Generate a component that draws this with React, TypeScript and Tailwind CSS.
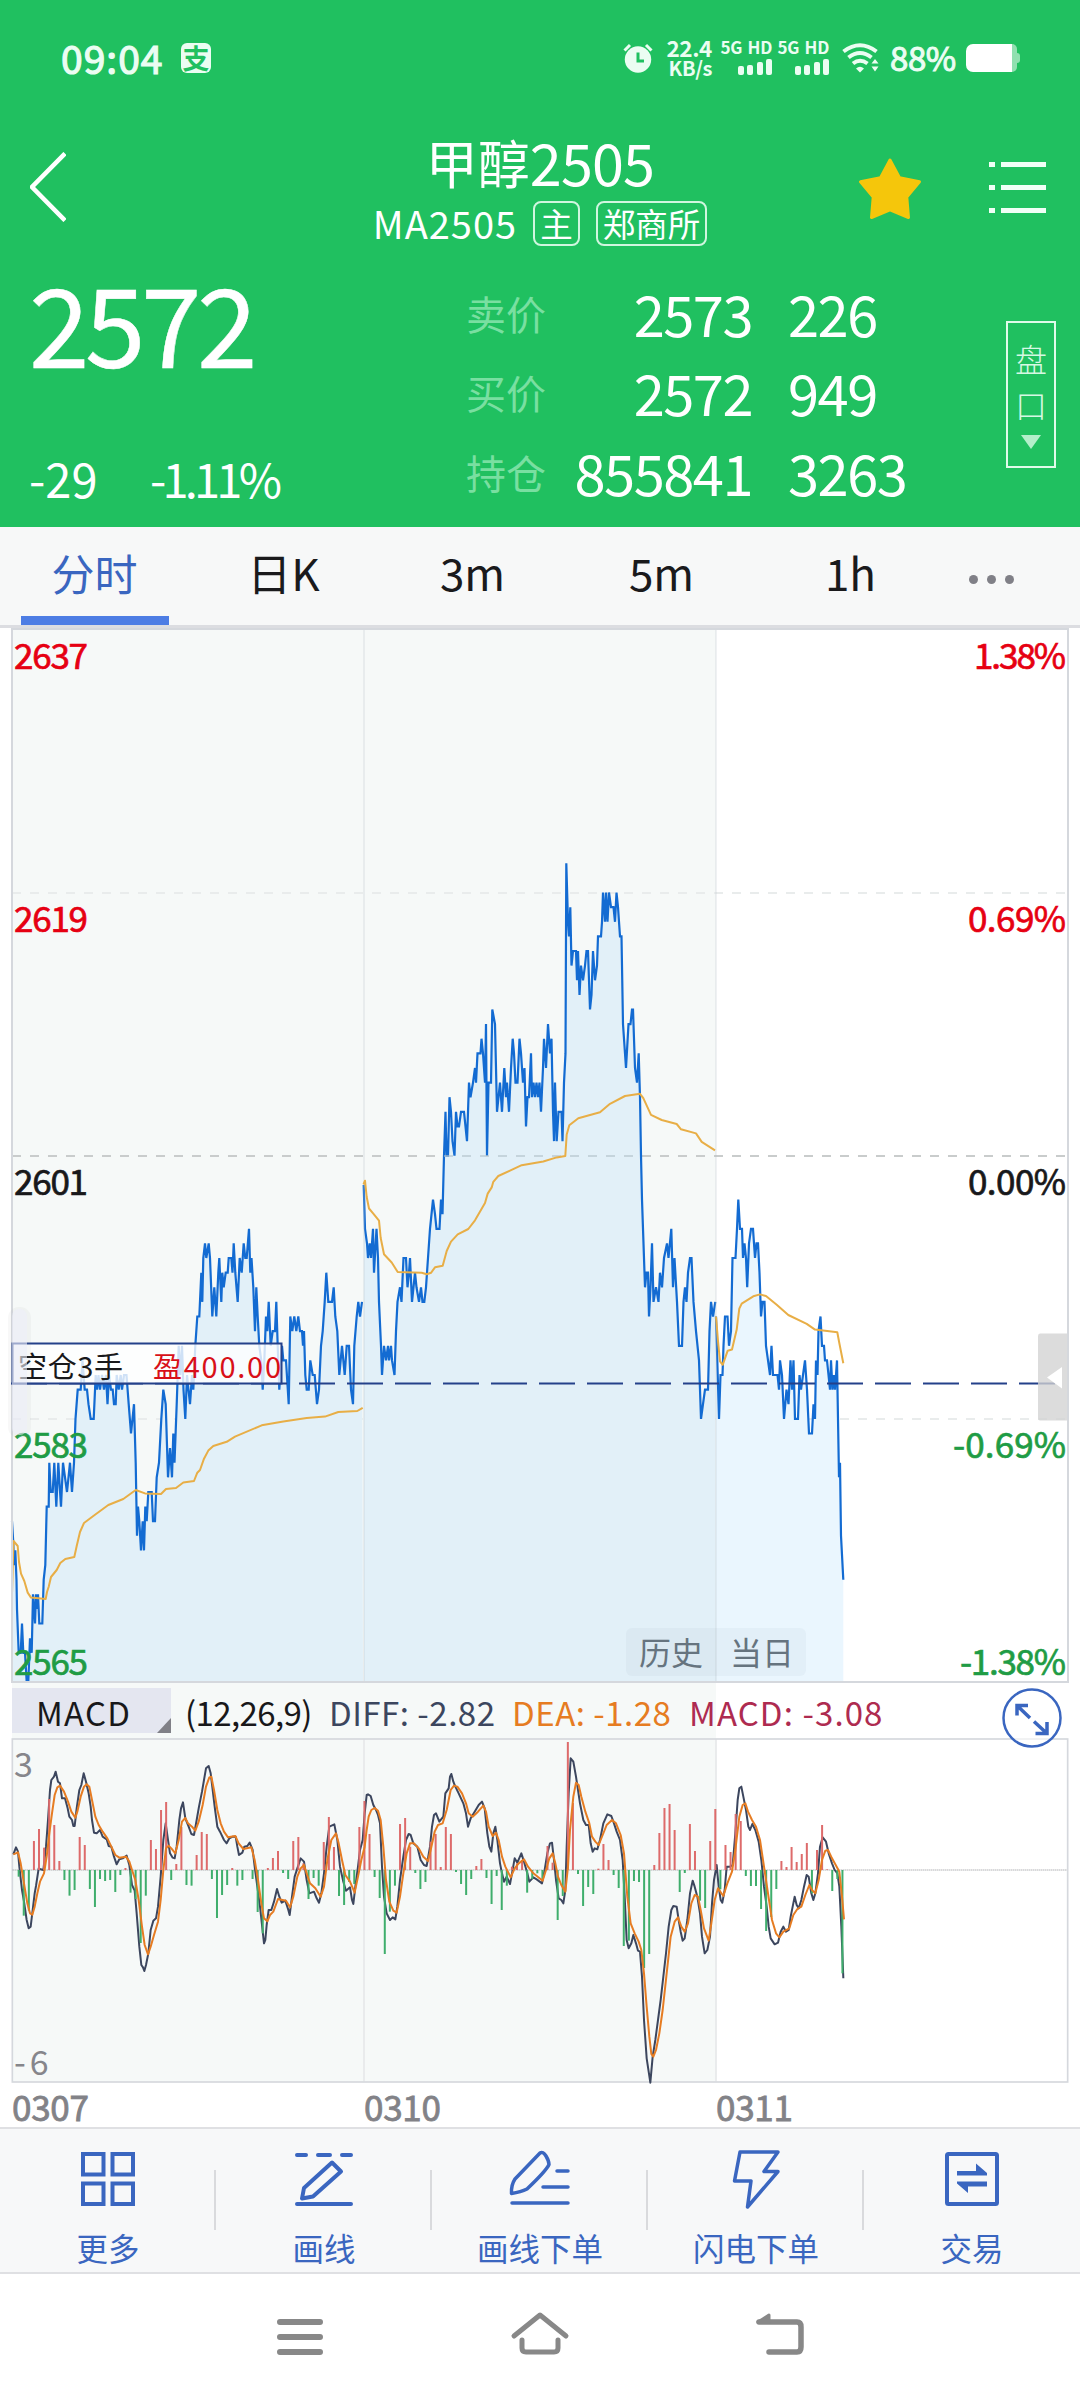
import React from "react";

// minute prices as "x,offset" — offset in yuan from the previous settlement (2601)
const PRICE_HISTORY_1 =
  "12,-25 13.3,-26.5 14,-28 15.3,-27 16.5,-29 17,-31 18.7,-34 20.7,-34 22,-32 23.3,-34 25,-34 26.7,-36 28.3,-36 30,-33 31.7,-34 33,-30 35,-32 36,-30 37,-31 38,-30 39.3,-32 42.3,-32 43.7,-29 45.3,-28 46.7,-24 48.7,-24 49.3,-21 50.7,-23 52.7,-23 54.3,-21 56.3,-24 58.3,-21 61,-24 63,-21 65,-22 67,-23 70,-21 72,-23 74,-21 75.5,-18 77.7,-16 80.7,-16 82.5,-14 84.7,-16 87,-16 88.5,-17 90.7,-18 93.7,-18 95.7,-15 97,-16 98.5,-15 100,-16 102,-15 104,-16 106,-15 107.5,-17 109,-15 111,-16 112.7,-16 114,-17 115.7,-17 116.7,-15 118.7,-16 120.7,-15 122,-16 124,-15 126.5,-15 128.7,-17 131,-19 134,-17 135.7,-21 137,-26 138,-24 139.3,-25 141,-27 142.7,-25 144,-27 145.3,-24 146.7,-25 148.3,-23 151.7,-23 153,-25 155,-25 156.7,-22 159,-21 161.3,-18 163.3,-16 165.7,-17 168,-22 170,-20 172,-22 173.3,-19 174.5,-21 176.7,-17 178.7,-13 180.3,-15 182,-13 183.5,-16 185.3,-18 187,-15 190,-17 192,-15 193.3,-16 195.3,-13 197.3,-11 199.3,-11 201.3,-8 202.3,-10 203.3,-7 205,-6 206.3,-7 208.7,-6 210,-7 212.3,-11 214.3,-9 216.3,-11 218.3,-8 219.3,-7 221.3,-10 222.3,-8 223.7,-9 225.7,-8 227.7,-8 228.7,-7 231.3,-7 232.5,-8 233.7,-6 235.3,-8 237.7,-10 239.7,-7 241.7,-8 243.7,-6 245.3,-7 246.7,-7 249,-5 250.3,-8 251.5,-7 253.3,-9 255,-12 256.3,-9 257.7,-11 259.3,-13 261.3,-14 262.7,-16 264.3,-14 266,-11 267.3,-12 268.7,-10 270.7,-13 272.7,-12 275,-12 276.3,-10 277.7,-13 279.3,-16 282,-13 283.3,-14 286,-14 288.7,-17 290.3,-11 292.3,-12 294.3,-11 296.3,-12 298.3,-11 300,-12 302,-12 303,-13 304,-12 305.3,-15 306.7,-16 308.7,-16 310.3,-14 312.7,-15 314.7,-15 317,-17 319,-16 321,-13 322.7,-12 324.7,-10 326.3,-8 328.3,-10 332,-10 333.7,-9 335.3,-11 337.3,-12 339.3,-15 342,-13 344.7,-15 346.7,-13 349,-13 351,-16 353,-17 354.3,-13 356.7,-11 358.3,-10 360,-11 362,-10";
const PRICE_HISTORY_2 =
  "363.7,-2 365,-5 367,-6 368,-7 369.7,-6 371,-7 373,-5 374,-8 376.5,-5 378,-7 379,-10 381,-13 382,-15 384,-13 386,-14 388,-13 389,-14 391,-13 392,-14 394.5,-15 396,-12 397.5,-10 400,-9 401.5,-10 403.5,-7 406,-7 407.5,-9 409,-8 410,-7 412,-10 415,-8 416.5,-9 419,-10 421,-9 422.5,-10 424.3,-10 426,-9 428,-7 430,-5 433,-3 435,-4 436.5,-5 439.5,-5 441,-3 442.5,-4 444,0 445.5,3 446.5,0 448,0 449.5,4 451,3 452.5,1 454.5,0 456,3 457.5,2 459,2 461,3 464,3 467,1 469,5 470.5,4 473,5 475,6 476,5 477.5,7 480.5,7 481.5,8 483,7 485,5 486,9 487,0 488.5,5 491,5 492.3,10 495,9 497,3 500,5 502,3 504.3,6 506,4 507,5 509,3 511,6 512.7,8 514,7 515.5,5 517.5,5 519.5,8 521,7 522,6 523,5 524.5,6 526,2 527.5,4 529,4 531,7 532,4 533.5,5 535,4 536.5,5 538,4 539.5,5 541,3 543,6 544,8 546,6 548,9 550,7 551.5,8 553,3 554,1 555,5 556.7,1 558.5,3 561.5,3 562.5,1 564,5 565.5,7 566.3,20 568,16 569,15 570.3,17 571.5,13 573,14 576,14 577,12 578,14 579.5,11 581,13 583,12 585,13 586.5,14 588,14 590,10 591.5,11 593,14 595,12 597,13 598,15 601,15 602,16 603,18 605,16 606,18 607.5,16 609,18 611,17 613.5,17 615,16 616.5,18 618,17 620,15 621.5,15 623,9 626,6 628.5,9 630.5,9 632,10 633,10 635,6 637,5 638.7,7 640,4 641,0 642,-3 643.5,-6 645,-9 646.5,-8 648,-8 649,-11 650.5,-9 652,-6 653.5,-10 656,-9 658.5,-10 660,-8 662,-9 664,-7 667,-6 668.5,-7 671.3,-5 673,-9 674.5,-7 677,-10 679,-13 682,-13 683.5,-10 685,-9 686.5,-10 688,-8 690,-7 691.5,-7 693.5,-10 696,-12 699,-14 701,-18 703,-17 705,-16 708,-16 709.5,-12 711,-10 713,-11 715.3,-10";
const PRICE_TODAY =
  "716,-11 719,-18 720.5,-15 722.5,-15 723.5,-13 725,-11 727.5,-11 729,-13 731,-12 732.5,-7 735.5,-7 737,-5 738.3,-3 740,-5 742,-5 743,-7 744.5,-6 746,-7 747.2,-9 749,-6 751,-5 753,-5 755,-7 756.5,-6 758,-6 759.5,-8 761,-11 762.5,-10 764.5,-10 766,-13 768,-14 770,-15 771.5,-13 773,-15 777.5,-15 779,-16 780,-14 782,-15 784,-18 786.5,-16 788.5,-17 790.5,-14 792,-16 793.5,-14 795,-18 798,-18 799.5,-15 801,-16 803,-15 805,-14 807,-16 809,-19 812,-19 813.5,-17 815,-18 816,-14 817.5,-15 818.5,-12 820.5,-11 822,-13 824,-13 825,-14 827,-14 828.5,-15 830,-16 831,-14 832.5,-16 834,-15 835,-16 837,-14 838,-18 839,-22 840,-21 841,-26 843.3,-29";

const AVG_LINES = [
  "12,1593.7 13.5,1541 17.7,1546 19,1562 21,1573.7 24.3,1581 27.7,1592.6 31,1597.6 45.7,1599 47,1592 48.7,1586.7 51,1577 56.7,1570 60.3,1563 65.3,1559 74.3,1557 76.7,1546 80,1532 84,1523 93.3,1516 108.3,1505 123.3,1499 135.7,1490 145,1493.4 161,1494 166,1489 176,1488 183.3,1482.5 194,1481 197.3,1472.7 200,1470 204,1458.7 208.3,1450.6 213.3,1446 226.7,1441.8 235,1436.6 261.7,1425.3 283.3,1421.5 306.7,1418 325,1416.6 338.3,1412 357.3,1411 362.7,1407.8",
  "363.5,1184.4 365,1180.7 366.7,1197 369,1208.5 373.3,1213.6 379,1220.7 380.7,1238 384,1254.3 391.7,1262.5 397.7,1272 421.7,1272.8 426.7,1274.3 431,1272.8 435,1267.3 442.7,1265.8 446.7,1251 451,1241.7 457.7,1234.3 468.3,1229 475,1220.3 485,1203 487.7,1193.6 491.7,1187.4 493.3,1181.8 498.3,1176 510,1170.7 521.7,1165.2 543.3,1161.5 556.7,1157.4 565.3,1156 566.7,1134.5 569.3,1125.2 578.3,1118.2 600,1112.3 610,1103.8 625,1096 640,1093.8 643.3,1098.2 651,1114.9 661.7,1120 676.7,1124 681,1129.3 696,1133.4 701.7,1141.9 715,1150.4",
  "716,1316.6 718,1341 720,1361.4 722.7,1364.8 727.7,1350.7 732,1349.5 736.7,1329.6 739.3,1308.6 741.7,1303.6 753.3,1296.3 760,1294.4 766,1296 776.7,1304.7 788.3,1315 806.7,1323.9 815,1329.6 837.3,1332.3 839.3,1343 843.3,1363.3",
];

// the indicator panel is drawn in thirds of a pixel
const DIFF_LINE =
  "40,523 48,502 54,515 58,560 66,630 72,665 80,720 86,745 92,740 98,690 104,640 108,618 116,565 122,568 130,570 138,500 144,420 150,330 154,300 162,290 167,275 174,305 180,310 186,355 195,355 203,385 208,410 216,420 220,438 224,438 230,385 238,330 244,315 251,280 258,305 266,340 272,380 276,420 282,458 290,460 300,450 308,470 320,478 326,498 334,500 342,530 350,553 358,538 368,535 380,527 388,555 396,615 404,632 410,700 418,800 424,855 429,862 433,873 438,855 445,820 452,750 460,722 468,715 474,680 482,590 490,480 497,430 504,480 510,520 518,533 524,535 530,500 538,420 543,385 549,367 556,415 566,440 574,462 582,465 590,420 597,380 606,335 612,300 618,265 626,258 632,280 638,330 644,380 652,440 660,455 672,480 680,490 688,475 698,470 707,470 712,500 717,525 727,518 733,500 742,498 749,488 758,510 764,560 772,620 780,680 786,735 792,790 796,780 800,735 806,690 814,690 822,665 831,627 838,650 845,668 856,662 865,690 869,705 876,650 884,590 892,565 902,535 912,545 920,600 928,640 942,635 950,655 957,668 964,640 972,580 980,500 988,440 1003,433 1012,480 1020,560 1030,605 1038,632 1050,622 1056,660 1060,672 1066,620 1074,560 1080,510 1088,480 1094,400 1100,345 1104,343 1112,348 1120,375 1128,390 1134,405 1140,430 1146,560 1152,650 1160,700 1170,720 1178,712 1186,718 1192,680 1200,600 1210,530 1218,480 1226,462 1232,465 1240,490 1252,500 1262,540 1272,555 1280,558 1290,500 1296,440 1302,405 1308,400 1318,425 1330,410 1336,340 1346,325 1350,290 1354,282 1360,305 1366,320 1376,340 1390,370 1398,400 1404,440 1412,415 1424,395 1436,375 1446,365 1454,385 1462,460 1468,500 1474,515 1480,460 1486,440 1492,480 1500,550 1506,580 1512,605 1520,590 1530,612 1536,580 1544,535 1552,548 1564,520 1572,545 1582,580 1588,605 1600,592 1610,598 1626,610 1634,570 1642,520 1650,490 1656,488 1662,540 1668,600 1676,655 1684,660 1690,670 1696,630 1700,500 1706,340 1712,235 1720,245 1728,290 1740,370 1750,420 1758,435 1766,435 1772,490 1778,515 1784,505 1792,508 1800,480 1810,430 1822,403 1834,408 1842,430 1850,455 1860,480 1868,540 1874,650 1880,780 1886,805 1894,790 1900,765 1908,790 1914,812 1920,815 1926,890 1932,1020 1940,1135 1946,1175 1951,1208 1958,1130 1966,1080 1974,1020 1982,960 1990,890 1998,820 2006,740 2014,690 2020,678 2030,680 2036,720 2042,755 2048,782 2054,775 2062,720 2070,640 2078,602 2084,620 2092,650 2100,700 2106,770 2114,820 2122,810 2130,770 2136,670 2142,600 2150,555 2156,620 2162,660 2167,668 2174,630 2180,560 2190,560 2198,555 2206,460 2213,360 2218,325 2224,320 2230,350 2238,390 2245,440 2250,450 2257,432 2266,450 2276,485 2284,540 2292,620 2300,680 2306,740 2312,775 2324,793 2334,788 2342,755 2350,740 2358,755 2366,750 2372,710 2378,680 2384,650 2390,675 2396,685 2404,660 2412,620 2420,585 2426,590 2434,640 2440,660 2446,640 2454,580 2460,500 2468,472 2478,485 2486,520 2496,550 2504,570 2512,580 2518,620 2524,740 2530,895";
const DEA_LINE =
  "40,523 54,517 62,550 72,610 82,670 90,700 97,704 104,680 112,640 120,605 132,580 140,530 148,460 156,400 164,345 172,322 180,317 192,335 204,365 214,395 226,413 232,395 242,350 252,320 260,313 268,320 276,360 286,410 296,435 308,455 322,475 334,500 346,525 358,533 378,530 388,545 396,570 406,600 416,660 426,740 434,795 444,823 452,800 462,765 474,725 482,660 490,570 498,505 506,497 514,505 526,520 536,480 546,425 556,414 564,430 576,440 586,452 596,425 608,375 618,320 628,292 634,290 642,330 652,390 662,430 672,455 684,472 706,468 716,490 730,507 754,502 764,540 774,600 784,670 792,715 802,724 810,705 820,695 834,657 858,662 870,682 880,650 892,590 902,565 912,555 920,580 930,610 946,625 962,650 972,620 982,540 994,480 1008,460 1016,490 1026,540 1036,585 1050,605 1064,638 1074,590 1084,540 1094,500 1100,450 1106,410 1114,390 1124,384 1134,392 1142,420 1150,500 1158,600 1168,665 1180,692 1190,698 1200,650 1210,580 1220,520 1230,490 1242,490 1256,505 1270,530 1284,543 1292,510 1304,455 1314,435 1328,430 1340,390 1352,330 1362,317 1372,320 1386,340 1398,370 1406,400 1418,410 1434,395 1450,377 1458,395 1466,440 1478,468 1488,458 1496,480 1506,530 1516,560 1532,592 1544,565 1556,550 1572,538 1584,560 1600,580 1628,602 1638,570 1648,535 1658,520 1666,550 1674,590 1684,615 1696,635 1704,560 1710,450 1720,350 1728,308 1736,315 1744,350 1756,395 1768,430 1776,470 1786,485 1796,495 1808,465 1820,435 1836,420 1848,430 1862,465 1872,520 1882,650 1892,730 1904,760 1916,785 1924,810 1932,880 1940,980 1948,1070 1954,1122 1960,1130 1968,1110 1978,1060 1988,990 2000,880 2012,770 2024,725 2034,712 2044,740 2054,755 2064,730 2074,670 2084,645 2094,650 2102,690 2112,745 2126,782 2134,730 2144,660 2154,625 2170,648 2182,610 2196,575 2206,510 2218,410 2228,375 2236,370 2244,395 2256,420 2268,440 2280,480 2292,560 2304,640 2316,720 2328,760 2338,772 2350,755 2368,745 2380,705 2392,687 2404,680 2416,645 2428,615 2436,630 2446,640 2456,600 2466,540 2476,512 2484,510 2496,535 2510,560 2518,575 2526,650 2532,718";
const MACD_ZERO = 570;
const MACD_BARS = [
  590, 707, 692, 483, 447, 503, 357, 435, 543, 600, 647, 630, 471, 495, 627, 681,
  597, 603, 600, 636, 585, 564, 638, 657, 789, 647, 480, 507, 390, 366, 600, 552,
  441, 615, 617, 525, 456, 462, 597, 714, 645, 615, 564, 617, 600, 570, 597, 696,
  760, 564, 534, 513, 579, 597, 483, 471, 550, 657, 594, 617, 486, 411, 501, 648,
  675, 606, 612, 441, 363, 462, 591, 654, 822, 695, 617, 432, 414, 500, 579, 627,
  606, 485, 462, 561, 441, 462, 576, 612, 645, 597, 558, 537, 594, 672, 588, 690,
  617, 560, 550, 540, 638, 597, 580, 597, 498, 548, 720, 648, 186, 369, 582, 678,
  621, 642, 566, 492, 540, 585, 624, 798, 782, 603, 606, 864, 822, 555, 459, 384,
  372, 450, 636, 579, 432, 513, 662, 684, 483, 387, 628, 495, 516, 402, 423, 588,
  618, 618, 687, 753, 711, 627, 543, 561, 501, 546, 522, 489, 640, 510, 435, 568,
  633, 597, 880,
];

const toPoints = (series: string) =>
  series
    .split(" ")
    .map((pair) => {
      const [x, offset] = pair.split(",").map(Number);
      return `${x},${(1155.7 - offset * 14.62).toFixed(1)}`;
    })
    .join(" ");

interface AreaProps {
  series: string;
  from: number;
  to: number;
  fill: string;
}

function Area({ series, from, to, fill }: AreaProps) {
  const points = toPoints(series);
  return (
    <>
      <polygon points={`${from},1681 ${points} ${to},1681`} fill={fill} />
      <polyline points={points} fill="none" stroke="#136bd2" strokeWidth="2.2" />
    </>
  );
}

const quotes = [
  { label: "卖价", price: "2573", amount: "226" },
  { label: "买价", price: "2572", amount: "949" },
  { label: "持仓", price: "855841", amount: "3263" },
];

const tabs = ["分时", "日K", "3m", "5m", "1h"];

const axis = [
  { y: 669, price: "2637", pct: "1.38%", x: 974, color: "#e60012" },
  { y: 932, price: "2619", pct: "0.69%", x: 968, color: "#e60012" },
  { y: 1195, price: "2601", pct: "0.00%", x: 968, color: "#18181a" },
  { y: 1457.5, price: "2583", pct: "-0.69%", x: 953, color: "#1f9c45" },
  { y: 1675.4, price: "2565", pct: "-1.38%", x: 960, color: "#1f9c45" },
];

function Signal() {
  return (
    <div className="flex h-[34px] w-12 flex-col items-end justify-between">
      <span className="h-3 whitespace-nowrap text-[17px] font-bold leading-3 tracking-[-0.3px] [word-spacing:2px]">
        5G HD
      </span>
      <div className="flex items-end gap-[3.3px]">
        <i className="h-[9px] w-1.5 rounded-[2px] bg-[#ebfdf2]" />
        <i className="h-2.5 w-1.5 rounded-[2px] bg-[#ebfdf2]" />
        <i className="h-[13px] w-1.5 rounded-[2px] bg-[#ebfdf2]" />
        <i className="h-4 w-1.5 rounded-[2px] bg-[#ebfdf2]" />
      </div>
    </div>
  );
}

function StatusBar() {
  return (
    <div className="flex h-[115px] items-center pl-[61px] pr-[60px] text-[#ebfdf2]">
      <span className="w-[120px] pb-px text-[39px] font-normal leading-none tracking-[1px] [-webkit-text-stroke:1.2px]">
        09:04
      </span>
      <span className="flex h-[30px] w-[30px] items-center justify-center rounded-[6px] bg-[#ebfdf2] text-[27px] font-bold leading-none text-[#20c060]">
        支
      </span>
      <div className="ml-auto flex items-center">
        <svg width="30" height="30" viewBox="0 0 30 30">
          <circle cx="15" cy="16.5" r="13.2" fill="currentColor" />
          <path d="M1.5 7.5 7 2M28.500 7.500 23 2" stroke="currentColor" strokeWidth="3" />
          <path d="M15 9.500v8.500h6" fill="none" stroke="#20c060" strokeWidth="3" />
        </svg>
        <div className="ml-3 flex w-[47px] flex-col items-end gap-px text-[22.5px] font-bold leading-[19px] tracking-[-0.4px]">
          <span>22.4</span>
          <span className="text-[20px]">KB/s</span>
        </div>
        <div className="ml-3 flex gap-[9px]">
          <Signal />
          <Signal />
        </div>
        <svg className="ml-[13px]" width="37" height="30" viewBox="0 0 37 30">
          <g fill="none" stroke="currentColor" strokeWidth="4">
            <path d="M1.500 8.500Q18 -4 34.500 8.500" />
            <path d="M6.500 14.500Q18 5.500 29.500 14.500" />
            <path d="M11 20.500Q18 15 25.500 20.500" />
          </g>
          <path d="M14 25.500Q18 22 22 25.500L18 29.500ZM29.500 20.500 33 16l3.500 4.500ZM29.500 23.500h7L33 28.500Z" fill="currentColor" />
        </svg>
        <span className="ml-[11px] w-[68px] text-[33px] leading-none tracking-[-0.4px] [-webkit-text-stroke:1px]">
          88%
        </span>
        <div className="ml-2 flex items-center">
          <div className="h-7 w-[46px] rounded-l-[7px] bg-white" />
          <div className="h-7 w-[5px] rounded-r-[5px] bg-[#90e0b0]" />
          <div className="h-2.5 w-[3px] rounded-r-[3px] bg-[#90e0b0]" />
        </div>
      </div>
    </div>
  );
}

function Header() {
  return (
    <header className="h-[527px] bg-[#20c060] text-white">
      <StatusBar />
      <div className="flex h-[144px] items-center">
        <div className="w-[358px] pl-[30px]">
          <svg width="36" height="70" viewBox="0 0 36 70">
            <path d="M35 1.500 2 35l33 33.500" fill="none" stroke="currentColor" strokeWidth="4.500" />
          </svg>
        </div>
        <div className="flex w-[364px] flex-col items-center self-start pt-[14px]">
          <div className="flex h-[66px] items-center whitespace-nowrap leading-none">
            <span className="text-[52px]">甲醇</span>
            <span className="text-[57.5px] tracking-[-0.8px]">2505</span>
          </div>
          <div className="mt-[5px] flex h-[46px] items-center text-[38px] leading-none">
            <span className="tracking-[1px]">MA2505</span>
            <span className="ml-4 flex h-[45px] items-center rounded-[8px] border-2 border-[#d0f6df] px-[5px] text-[32.5px]">
              主
            </span>
            <span className="ml-4 flex h-[45px] items-center rounded-[8px] border-2 border-[#d0f6df] px-[5px] text-[32.5px]">
              郑商所
            </span>
          </div>
        </div>
        <svg className="ml-[136px] mt-1" width="64" height="62" viewBox="0 0 64 62">
          <path
            d="M32 2 41.500 19.800 61.500 23.800 48.800 39 50.500 59.500 32 51.800 13.500 59.500 15.200 39 2.500 23.800 22.500 19.800Z"
            fill="#f5c60b"
            stroke="#f5c60b"
            strokeWidth="3"
            strokeLinejoin="round"
          />
        </svg>
        <div className="ml-[67px] flex flex-col gap-[18px]">
          {[0, 1, 2].map((row) => (
            <div key={row} className="flex gap-1.5">
              <i className="h-[5px] w-1.5 bg-[#f0fff6]" />
              <i className="h-[5px] w-[45px] bg-[#f0fff6]" />
            </div>
          ))}
        </div>
      </div>
      <div className="flex h-[268px]">
        <div className="w-[466px] pl-[29px]">
          <div className="mt-[4px] h-[116px] text-[109px] leading-[116px] tracking-[-4.500px] [-webkit-text-stroke:0.5px]">
            2572
          </div>
          <div className="mt-[71px] flex text-[47px] leading-[56px]">
            <span className="w-[121px]">-29</span>
            <span className="tracking-[-3.8px]">-1.11%</span>
          </div>
        </div>
        <div className="mt-[14px] w-[540px]">
          {quotes.map((q) => (
            <div key={q.label} className="flex h-[79.500px] items-center leading-none">
              <span className="w-[83px] text-[40px] text-[#79dfa1]">{q.label}</span>
              <span className="w-[203px] text-right text-[56px] tracking-[-1.500px]">{q.price}</span>
              <span className="ml-9 text-[56px] tracking-[-1.500px]">{q.amount}</span>
            </div>
          ))}
        </div>
        <div className="mt-[62px] flex h-[147px] w-[50px] flex-col items-center border-2 border-[#e0fbea] pt-3 text-[32px] font-light leading-[46px] text-[#d6f8e3]">
          <span>盘</span>
          <span>口</span>
          <svg className="mt-2" width="20" height="14" viewBox="0 0 20 14">
            <path d="M0 0h20L10 14Z" fill="#b3efca" />
          </svg>
        </div>
      </div>
    </header>
  );
}

function Tabs() {
  return (
    <nav className="flex h-[101px] border-b-[3px] border-[#dcdde1] bg-[#f7f8f8] text-[44px] text-[#1a1a1c]">
      {tabs.map((tab, i) => (
        <div key={tab} className="flex w-[189px] flex-col items-center justify-between">
          <span
            className={
              i === 0
                ? "pt-[14px] text-[43px] leading-[62px] text-[#3a66c0]"
                : "pt-[14px] leading-[62px]"
            }
          >
            {tab}
          </span>
          {i === 0 && <div className="h-[9px] w-[148px] bg-[#4d7de4]" />}
        </div>
      ))}
      <div className="flex w-[92px] items-center justify-center gap-[9px] pt-[6px]">
        <i className="h-[9px] w-[9px] rounded-full bg-[#808087]" />
        <i className="h-[9px] w-[9px] rounded-full bg-[#808087]" />
        <i className="h-[9px] w-[9px] rounded-full bg-[#808087]" />
      </div>
    </nav>
  );
}

function PriceChart() {
  return (
    <svg className="block overflow-visible" width="1080" height="1055" viewBox="0 628 1080 1055">
      <rect x="12" y="628" width="704" height="1055" fill="#f6f9f8" />
      <g stroke="#e9ecec" strokeWidth="2" strokeDasharray="9 9">
        <path d="M12 893H1067M12 1419H1067" />
        <path d="M12 1156H1067" stroke="#c9cccc" />
      </g>
      <Area series={PRICE_HISTORY_1} from={12} to={363} fill="#e2f0f8" />
      <Area series={PRICE_HISTORY_2} from={364} to={716} fill="#e2f0f8" />
      <Area series={PRICE_TODAY} from={716} to={843.3} fill="#eaf6fe" />
      <path d="M364 628V1682M716 628V1682" stroke="#b8c4cc" strokeOpacity=".3" strokeWidth="1.500" />
      <path d="M444 1156H640" stroke="#b3c2ca" strokeWidth="2" strokeDasharray="9 9" opacity=".6" />
      {AVG_LINES.map((points) => (
        <polyline key={points} points={points} fill="none" stroke="#e8ae46" strokeWidth="2" strokeLinejoin="round" />
      ))}
      <rect x="12" y="629" width="1056" height="1053" fill="none" stroke="#d5d8dd" strokeWidth="2" />

      <g fontSize="35" strokeWidth=".7">
        {axis.map((a) => (
          <g key={a.price} fill={a.color} stroke={a.color}>
            <text x="14" y={a.y} textLength="74">
              {a.price}
            </text>
            <text x={a.x} y={a.y} textLength={1066 - a.x}>
              {a.pct}
            </text>
          </g>
        ))}
      </g>

      <path d="M11 1383.500H1067" stroke="#24418a" strokeWidth="2" strokeDasharray="36 12" />
      <rect x="12.500" y="1343.500" width="269" height="40" fill="#fff" fillOpacity=".8" stroke="#24418a" strokeWidth="2" />
      <g fontSize="29">
        <text x="18" y="1377.5" textLength="105" fill="#18181a">
          空仓3手
        </text>
        <text x="153" y="1377.5" textLength="128" fill="#d81018">
          盈400.00
        </text>
      </g>
      <rect x="8" y="1307" width="23" height="131" rx="11" fill="#808080" fillOpacity=".06" />
      <rect x="12" y="1309" width="15" height="126" rx="7" fill="#eceffa" fillOpacity=".6" />

      <path d="M1040 1333.500H1067V1420.500H1040Q1038 1420.500 1038 1418V1336Q1038 1333.500 1040 1333.500Z" fill="#d2d2d2" fillOpacity=".78" />
      <path d="M1047 1377.500 1062 1367v21.500Z" fill="#fff" />

      <rect x="626" y="1628" width="180" height="48" rx="6" fill="#506878" fillOpacity=".045" />
      <g fontSize="32" fill="#66747f">
        <text x="639" y="1665">历史</text>
        <text x="730" y="1665">当日</text>
      </g>
    </svg>
  );
}

function IndicatorBar() {
  return (
    <div className="flex h-[55px] pl-3">
      <div className="flex w-[704px] shrink-0 items-start whitespace-nowrap bg-[#f6f9f8] pt-[5px] text-[33px] leading-[48px]">
        <div className="flex h-[45px] w-[159px] shrink-0 bg-[#e4e6f0] text-[#18181a]">
          <span className="w-[145px] pl-[24px] tracking-[1.2px]">MACD</span>
          <svg className="mt-auto" width="14" height="15" viewBox="0 0 14 15">
            <path d="M14 0V15H0Z" fill="#808087" />
          </svg>
        </div>
        <span className="ml-[14px] w-[144px] shrink-0 tracking-[-0.6px] text-[#18181a]">(12,26,9)</span>
        <span className="w-[183px] shrink-0 tracking-[0.5px] text-[#3c465e]">DIFF: -2.82</span>
        <span className="w-[177px] shrink-0 tracking-[0.5px] text-[#e67c22]">DEA: -1.28</span>
        <span className="tracking-[1.1px] text-[#ae2b50]">MACD: -3.08</span>
      </div>
      <svg className="z-10 ml-[285px] mt-[4px] shrink-0 overflow-visible" width="62" height="62" viewBox="0 0 62 62">
        <circle cx="31" cy="31" r="28.500" fill="#fff" fillOpacity=".6" stroke="#3a66c0" strokeWidth="2.500" />
        <g fill="none" stroke="#3a66c0" strokeWidth="3.500">
          <path d="M16 28.500V18.500H27M16 18.500 29 31" />
          <path d="M46 35V46.500H34.500M46 46.500 33 34.500" />
        </g>
      </svg>
    </div>
  );
}

function MacdChart() {
  return (
    <svg className="block overflow-visible" width="1080" height="345" viewBox="0 174 3240 1035">
      <rect x="36" y="174" width="2112" height="1032" fill="#f6f9f8" />
      <path d="M1092 176V1205M2148 176V1205" stroke="#e6e9ea" strokeWidth="5" />
      <rect x="37" y="177" width="3166" height="1029" fill="none" stroke="#d5d8dd" strokeWidth="5" />
      <path d={`M38 ${MACD_ZERO}H3201`} stroke="#8a8c90" strokeWidth="3" strokeDasharray="3 3" />
      <polyline points={DIFF_LINE} fill="none" stroke="#3c465e" strokeWidth="6" strokeLinejoin="round" />
      {MACD_BARS.map((end, i) => (
        <rect
          key={i}
          x={53 + i * 15.255}
          y={Math.min(end, MACD_ZERO)}
          width="6"
          height={Math.abs(end - MACD_ZERO)}
          fill={end < MACD_ZERO ? "#dd6b6b" : "#3fae6c"}
        />
      ))}
      <polyline points={DEA_LINE} fill="none" stroke="#e67c22" strokeWidth="6" strokeLinejoin="round" />
      <g fontSize="102" fill="#86868b">
        <text x="42" y="290">3</text>
        <text x="42" y="1186" textLength="104">-6</text>
      </g>
    </svg>
  );
}

function GridIcon() {
  return (
    <svg width="62" height="62" viewBox="0 0 62 62" fill="none" stroke="currentColor" strokeWidth="4">
      <path d="M6 5h20.500v20.500H6ZM35.500 5H56v20.500H35.500ZM6 34.500h20.500V55H6ZM35.500 34.500H56V55H35.500Z" />
    </svg>
  );
}

function DrawIcon() {
  return (
    <svg width="62" height="62" viewBox="0 0 62 62" fill="none" stroke="currentColor" strokeWidth="4">
      <path d="M4 6h9M25 6h12M49 6h9M4 55h54" strokeLinecap="round" />
      <path d="M9 49.500 11 39 39 13.500 48 22.500 20 47.500Z" strokeLinejoin="round" />
    </svg>
  );
}

function DrawOrderIcon() {
  return (
    <svg width="62" height="62" viewBox="0 0 62 62" fill="none" stroke="currentColor" strokeWidth="3.500">
      <path d="M2.500 44.500Q2 36 6 30L31 4Q34 2 37 7T40 15.500Q37 22 18 40Q12 43 2.500 44.500Z" strokeLinejoin="round" />
      <path d="M48 22H59M34 38H59M3 54H59" strokeLinecap="round" />
    </svg>
  );
}

function FlashIcon() {
  return (
    <svg width="62" height="62" viewBox="0 0 62 62" fill="none" stroke="currentColor" strokeWidth="3.500">
      <path d="M15 3H53L39 22.500H53L22.500 58 26 32H9.500Z" strokeLinejoin="round" />
    </svg>
  );
}

function TradeIcon() {
  return (
    <svg width="62" height="62" viewBox="0 0 62 62">
      <rect x="6" y="5" width="50" height="50" rx="1.500" fill="none" stroke="currentColor" strokeWidth="4" />
      <path d="M16 22h19v-7.500l11 9.500v2.500H16ZM46 37.500H27V44L16 34.500v-2H46Z" fill="currentColor" />
    </svg>
  );
}

const tools = [
  { label: "更多", icon: <GridIcon /> },
  { label: "画线", icon: <DrawIcon /> },
  { label: "画线下单", icon: <DrawOrderIcon /> },
  { label: "闪电下单", icon: <FlashIcon /> },
  { label: "交易", icon: <TradeIcon /> },
];

function Toolbar() {
  return (
    <div className="flex h-[147px] border-y-2 border-[#dfe0e3] bg-[#f7f8f9] text-[#3a66c0]">
      {tools.map((tool, i) => (
        <React.Fragment key={tool.label}>
          {i > 0 && <div className="-ml-[2px] mt-[41px] h-[60px] w-[2px] bg-[#d9dadd]" />}
          <div className="flex w-[216px] shrink-0 flex-col items-center pt-5">
            {tool.icon}
            <span className="mt-[16px] text-[31.500px] leading-[40px]">{tool.label}</span>
          </div>
        </React.Fragment>
      ))}
    </div>
  );
}

function SystemNav() {
  return (
    <div className="flex h-[126px] items-start justify-between px-[270px] pt-[35px] text-[#888]">
      <svg width="60" height="50" viewBox="0 0 60 50" stroke="currentColor" strokeWidth="6" strokeLinecap="round">
        <path d="M10 13H50M10 28H50M10 43H50" />
      </svg>
      <svg width="60" height="50" viewBox="0 0 60 50" fill="none" stroke="currentColor" strokeWidth="5" strokeLinecap="round" strokeLinejoin="round">
        <path d="M4 27 30 6 56 27M12 31V39Q12 43 16 43H44Q48 43 48 39V31" />
      </svg>
      <svg width="60" height="50" viewBox="0 0 60 50" fill="none" stroke="currentColor" strokeWidth="5.500" strokeLinecap="round" strokeLinejoin="round">
        <path d="M19 43H47Q51 43 51 38V18Q51 13 47 13H9" />
        <path d="M19 6 8 13H19Z" fill="currentColor" strokeWidth="3" />
      </svg>
    </div>
  );
}

export default function App() {
  return (
    <div className="h-[2400px] w-[1080px] overflow-hidden bg-white font-['Noto_Sans_CJK_SC','Noto_Sans',sans-serif]">
      <Header />
      <Tabs />
      <PriceChart />
      <IndicatorBar />
      <MacdChart />
      <div className="flex h-11 pl-3 text-[35px] leading-[46px] tracking-[-0.3px] text-[#828287] [-webkit-text-stroke:0.8px]">
        <span className="w-[352px]">0307</span>
        <span className="w-[352px]">0310</span>
        <span>0311</span>
      </div>
      <Toolbar />
      <SystemNav />
    </div>
  );
}
